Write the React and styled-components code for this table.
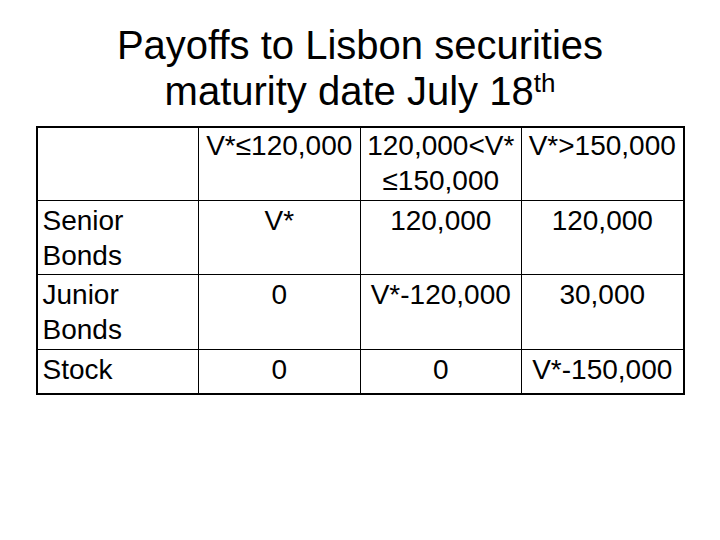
import React from 'react';
import styled, { createGlobalStyle } from 'styled-components';

const GlobalStyle = createGlobalStyle`
  html, body {
    margin: 0;
    padding: 0;
    background: #ffffff;
  }
  body {
    font-family: "Liberation Sans", Arial, sans-serif;
    color: #000000;
  }
`;

const columns = ['V*≤120,000', '120,000<V* ≤150,000', 'V*>150,000'];

const rows = [
  { label: 'Senior Bonds', values: ['V*', '120,000', '120,000'] },
  { label: 'Junior Bonds', values: ['0', 'V*-120,000', '30,000'] },
  { label: 'Stock', values: ['0', '0', 'V*-150,000'] },
];

export default function App() {
  return (
    <>
      <GlobalStyle />
      <Slide>
        <Title>
          Payoffs to Lisbon securities
          <br />
          maturity date July 18<Sup>th</Sup>
        </Title>
        <Grid>
          <Cell header />
          {columns.map(c => (
            <Cell key={c} header center>{c}</Cell>
          ))}
          {rows.map(r => (
            <React.Fragment key={r.label}>
              <Cell>{r.label}</Cell>
              {r.values.map((v, i) => (
                <Cell key={i} center>{v}</Cell>
              ))}
            </React.Fragment>
          ))}
        </Grid>
      </Slide>
    </>
  );
}

const Slide = styled.div`
  width: 720px;
  height: 540px;
  display: flex;
  flex-direction: column;
  align-items: center;
  padding-top: 22px;
  box-sizing: border-box;
`;

const Title = styled.h1`
  margin: 0;
  font-size: 40px;
  font-weight: normal;
  line-height: 46px;
  text-align: center;
`;

const Sup = styled.span`
  font-size: 26px;
  line-height: 1;
  vertical-align: 13px;
`;

const Grid = styled.div`
  margin-top: 12px;
  width: 649px;
  box-sizing: border-box;
  border: 2px solid #000;
  background: #000;
  display: grid;
  grid-template-columns: repeat(4, 1fr);
  grid-template-rows: 72px 73px 74px 43px;
  gap: 1px;
`;

const Cell = styled.div`
  background: #fff;
  font-size: 28px;
  line-height: 35px;
  padding: ${props => (props.header ? '0' : '2px')} 5px 0;
  text-align: ${props => (props.center ? 'center' : 'left')};
  overflow: hidden;
`;
